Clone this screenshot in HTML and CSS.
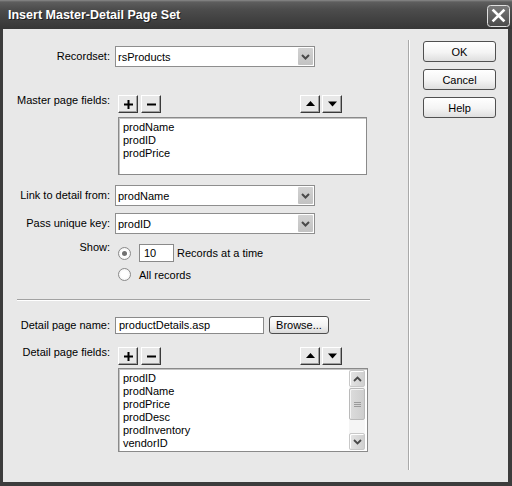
FILE: index.html
```html
<!DOCTYPE html>
<html>
<head>
<meta charset="utf-8">
<link rel="stylesheet" href="styles.css">
</head>
<body>
<div class="window">
  <div class="titlebar">
    <span class="title">Insert Master-Detail Page Set</span>
    <span class="close">
      <svg width="23" height="22" viewBox="0 0 23 22">
        <defs>
          <linearGradient id="cg" x1="0" y1="0" x2="0" y2="1">
            <stop offset="0" stop-color="#7a7a7a"/>
            <stop offset="1" stop-color="#4a4a4a"/>
          </linearGradient>
        </defs>
        <rect x="0.5" y="0.5" width="22" height="21" rx="3" fill="url(#cg)" stroke="#e0e0e0"/>
        <path d="M6.5 5.5 L16.5 15.5 M16.5 5.5 L6.5 15.5" stroke="#fff" stroke-width="2.6" stroke-linecap="square"/>
      </svg>
    </span>
  </div>
  <div class="body">
    <div class="left">
      <div class="row">
        <span class="lbl">Recordset:</span>
        <div class="select"><span class="val">rsProducts</span><span class="arrow"><svg width="15" height="17" viewBox="0 0 15 17"><path d="M4 7 L7.5 10.5 L11 7" fill="none" stroke="#4a4a4a" stroke-width="2"/></svg></span></div>
      </div>

      <div class="row top r-master">
        <span class="lbl lbl-up">Master page fields:</span>
        <div class="toolbar">
          <div class="grp">
            <span class="tb"><svg width="9" height="9" viewBox="0 0 9 9"><path d="M0 3.5h9v2H0zM3.5 0h2v9h-2z" fill="#000"/></svg></span>
            <span class="tb"><svg width="9" height="9" viewBox="0 0 9 9"><path d="M0 3.5h9v2H0z" fill="#000"/></svg></span>
          </div>
          <div class="grp">
            <span class="tb"><svg width="9" height="6" viewBox="0 0 9 6"><path d="M4.5 0 L9 5 L0 5 Z" fill="#000"/></svg></span>
            <span class="tb"><svg width="9" height="6" viewBox="0 0 9 6"><path d="M0 0.5 L9 0.5 L4.5 5.5 Z" fill="#000"/></svg></span>
          </div>
        </div>
      </div>

      <div class="list master">
        <div class="items">
          <div>prodName</div>
          <div>prodID</div>
          <div>prodPrice</div>
        </div>
      </div>

      <div class="row r-link">
        <span class="lbl">Link to detail from:</span>
        <div class="select"><span class="val">prodName</span><span class="arrow"><svg width="15" height="17" viewBox="0 0 15 17"><path d="M4 7 L7.5 10.5 L11 7" fill="none" stroke="#4a4a4a" stroke-width="2"/></svg></span></div>
      </div>

      <div class="row r-pass">
        <span class="lbl">Pass unique key:</span>
        <div class="select"><span class="val">prodID</span><span class="arrow"><svg width="15" height="17" viewBox="0 0 15 17"><path d="M4 7 L7.5 10.5 L11 7" fill="none" stroke="#4a4a4a" stroke-width="2"/></svg></span></div>
      </div>

      <div class="row top r-show">
        <span class="lbl lbl-show">Show:</span>
        <span class="radio checked"></span>
        <span class="textbox">10</span>
        <span class="rtext">Records at a time</span>
      </div>

      <div class="row r-all">
        <span class="lbl"></span>
        <span class="radio"></span>
        <span class="alltext">All records</span>
      </div>

      <div class="hsep"></div>

      <div class="row r-dname">
        <span class="lbl">Detail page name:</span>
        <span class="input">productDetails.asp</span>
        <span class="browse">Browse...</span>
      </div>

      <div class="row top r-dfields">
        <span class="lbl lbl-up">Detail page fields:</span>
        <div class="toolbar">
          <div class="grp">
            <span class="tb"><svg width="9" height="9" viewBox="0 0 9 9"><path d="M0 3.5h9v2H0zM3.5 0h2v9h-2z" fill="#000"/></svg></span>
            <span class="tb"><svg width="9" height="9" viewBox="0 0 9 9"><path d="M0 3.5h9v2H0z" fill="#000"/></svg></span>
          </div>
          <div class="grp">
            <span class="tb"><svg width="9" height="6" viewBox="0 0 9 6"><path d="M4.5 0 L9 5 L0 5 Z" fill="#000"/></svg></span>
            <span class="tb"><svg width="9" height="6" viewBox="0 0 9 6"><path d="M0 0.5 L9 0.5 L4.5 5.5 Z" fill="#000"/></svg></span>
          </div>
        </div>
      </div>

      <div class="list detail">
        <div class="items">
          <div>prodID</div>
          <div>prodName</div>
          <div>prodPrice</div>
          <div>prodDesc</div>
          <div>prodInventory</div>
          <div>vendorID</div>
        </div>
        <div class="sb">
          <span class="sbbtn"><svg width="9" height="6" viewBox="0 0 9 6"><path d="M1 5 L4.5 1.5 L8 5" fill="none" stroke="#4a4a4a" stroke-width="1.8"/></svg></span>
          <span class="thumb"><svg width="7" height="7" viewBox="0 0 7 7"><path d="M0 1.5h7M0 3.5h7M0 5.5h7" stroke="#9a9a9a" stroke-width="1"/></svg></span>
          <span class="track"></span>
          <span class="sbbtn"><svg width="9" height="6" viewBox="0 0 9 6"><path d="M1 1 L4.5 4.5 L8 1" fill="none" stroke="#4a4a4a" stroke-width="1.8"/></svg></span>
        </div>
      </div>
    </div>

    <div class="vsep"></div>

    <div class="right">
      <span class="btn">OK</span>
      <span class="btn">Cancel</span>
      <span class="btn">Help</span>
    </div>
  </div>
</div>
</body>
</html>
```

FILE: styles.css
```css
* { box-sizing: border-box; }
html, body { margin: 0; padding: 0; }
body {
  width: 512px;
  height: 486px;
  overflow: hidden;
  font-family: "Liberation Sans", Arial, sans-serif;
  font-size: 11px;
  color: #000;
  background: #3b3b3b;
}
.window {
  width: 512px;
  height: 486px;
  display: flex;
  flex-direction: column;
  background: #3c3c3c;
}
.titlebar {
  height: 29px;
  flex: none;
  display: flex;
  align-items: center;
  justify-content: space-between;
  padding: 0 2px 0 8px;
  background: linear-gradient(#8a8a8a 0, #5e5e5e 2px, #4d4d4d 9px, #3e3e3e 22px, #363636 29px);
}
.title {
  color: #fff;
  font-weight: bold;
  font-size: 12.5px;
  text-shadow: 1px 1px 0 #1e1e1e;
  margin-top: 1px;
}
.close { width: 23px; height: 22px; display: block; margin-top: 2px; }
.close svg { display: block; }

.body {
  flex: 1;
  margin: 0 4px 4px 3px;
  background: #e8e8e8;
  display: flex;
}
.left {
  width: 405px;
  flex: none;
  padding-top: 17px;
  display: flex;
  flex-direction: column;
}
.vsep {
  width: 2px;
  margin: 11px 0 12px;
  border-left: 1px solid #a9a9a9;
  border-right: 1px solid #fff;
}
.right {
  padding: 12px 0 0 13px;
  display: flex;
  flex-direction: column;
  gap: 7px;
}
.btn {
  width: 73px;
  height: 21px;
  border: 1px solid #505050;
  border-radius: 3px;
  background: linear-gradient(#ffffff, #f4f4f4 55%, #dedede);
  display: flex;
  align-items: center;
  justify-content: center;
}

.row { display: flex; align-items: center; }
.row.top { align-items: flex-start; }
.lbl {
  width: 107px;
  margin-right: 5px;
  text-align: right;
  flex: none;
  line-height: 13px;
}
.lbl-up { margin-top: -1px; }
.lbl-show { margin-top: -3px; }

.select {
  width: 200px;
  height: 21px;
  border: 1px solid #8e8e8e;
  background: #fff;
  padding: 1px;
  display: flex;
  align-items: center;
}
.select .val { padding-left: 1px; flex: 1; }
.arrow {
  width: 15px;
  height: 17px;
  background: linear-gradient(#d2d2d2, #c2c2c2);
  border-radius: 1px;
  display: block;
}
.arrow svg { display: block; }

.r-master { margin-top: 28px; }
.toolbar {
  width: 224px;
  margin-left: 3px;
  display: flex;
  justify-content: space-between;
}
.grp { display: flex; gap: 2px; }
.grp:first-child { gap: 3px; }
.tb {
  width: 20px;
  height: 18px;
  border: 1px solid;
  border-color: #fff #3a3a3a #3a3a3a #fff;
  box-shadow: inset -1px -1px 0 #a0a0a0;
  background: #e8e8e8;
  display: flex;
  align-items: center;
  justify-content: center;
}
.tb svg { display: block; }

.list {
  margin-left: 115px;
  border: 1px solid #8a8a8a;
  box-shadow: inset 1px 1px 0 #c4c4c4;
  background: #fff;
  display: flex;
}
.items {
  flex: 1;
  padding: 3px 0 0 4px;
  line-height: 13px;
}
.master { margin-top: 4px; width: 249px; height: 58px; }
.detail { margin-top: 3px; width: 250px; height: 84px; padding: 1px 2px 1px 0; }
.detail .items { padding-top: 2px; }

.r-link { margin-top: 10px; }
.r-pass { margin-top: 7px; }
.r-show { margin-top: 10px; }

.radio {
  width: 13px;
  height: 13px;
  border-radius: 50%;
  border: 1px solid #8a8a8a;
  background: radial-gradient(circle, #fff 40%, #ececec 100%);
  margin-left: 3px;
  flex: none;
  display: flex;
  align-items: center;
  justify-content: center;
}
.r-show .radio { margin-top: 3px; }
.radio.checked::after {
  content: "";
  width: 5px;
  height: 5px;
  border-radius: 50%;
  background: #707070;
}
.textbox {
  width: 35px;
  height: 18px;
  margin-left: 8px;
  border: 1px solid #8a8a8a;
  background: #fff;
  padding-left: 4px;
  line-height: 16px;
}
.rtext { margin-left: 3px; line-height: 18px; }
.r-all { margin-top: 4px; height: 17px; }
.alltext { margin-left: 8px; }

.hsep {
  margin: 16px 0 0 14px;
  width: 353px;
  height: 2px;
  border-top: 1px solid #a2a2a2;
  border-bottom: 1px solid #fff;
}

.r-dname { margin-top: 15px; height: 18px; }
.input {
  width: 149px;
  height: 17px;
  border: 1px solid #8a8a8a;
  background: #fff;
  padding-left: 3px;
  line-height: 15px;
}
.browse {
  width: 60px;
  height: 18px;
  margin-left: 5px;
  border: 1px solid #4e4e4e;
  border-radius: 3px;
  background: linear-gradient(#ffffff, #f2f2f2 55%, #dadada);
  display: flex;
  align-items: center;
  justify-content: center;
}
.r-dfields { margin-top: 13px; }

.sb {
  width: 16px;
  display: flex;
  flex-direction: column;
  background: #f5f5f5;
}
.sbbtn {
  height: 17px;
  border: 1px solid #c8c8c8;
  border-radius: 2px;
  background: linear-gradient(90deg, #e4e4e4, #d0d0d0);
  box-shadow: inset 1px 1px 0 #fff;
  display: flex;
  align-items: center;
  justify-content: center;
}
.thumb {
  height: 32px;
  margin-top: 1px;
  border: 1px solid #bababa;
  border-radius: 2px;
  background: linear-gradient(90deg, #dcdcdc, #cecece);
  box-shadow: inset 1px 1px 0 #f4f4f4;
  display: flex;
  align-items: center;
  justify-content: center;
}
.track { flex: 1; }
.sb svg { display: block; }
```
